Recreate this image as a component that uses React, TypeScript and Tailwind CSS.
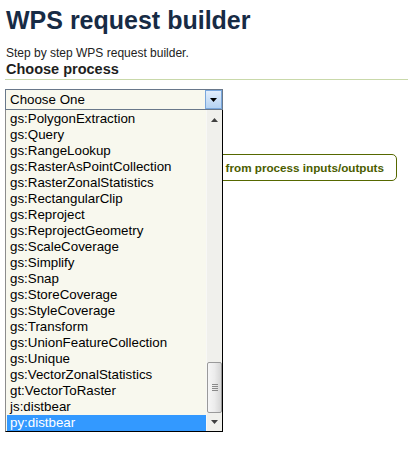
import React from "react";

const items = [
  "gs:PolygonExtraction",
  "gs:Query",
  "gs:RangeLookup",
  "gs:RasterAsPointCollection",
  "gs:RasterZonalStatistics",
  "gs:RectangularClip",
  "gs:Reproject",
  "gs:ReprojectGeometry",
  "gs:ScaleCoverage",
  "gs:Simplify",
  "gs:Snap",
  "gs:StoreCoverage",
  "gs:StyleCoverage",
  "gs:Transform",
  "gs:UnionFeatureCollection",
  "gs:Unique",
  "gs:VectorZonalStatistics",
  "gt:VectorToRaster",
  "js:distbear",
  "py:distbear",
];

export default function App() {
  return (
    <div className="relative w-[408px] h-[456px] bg-white overflow-hidden font-['Liberation_Sans',Arial,sans-serif]">
      <div className="pl-[6px] pt-[5px]">
        <h1 className="text-[25px] font-bold leading-[30px] text-[#172b45]">WPS request builder</h1>
        <p className="mt-[11px] text-[12px] leading-[14px] text-[#222]">Step by step WPS request builder.</p>
        <h2 className="mt-[1px] text-[14.5px] font-bold leading-[16px] text-[#1e1e1e]">Choose process</h2>
      </div>
      <div className="ml-[5px] mt-[2px] h-px bg-[#c9d9aa]" />

      <div className="relative ml-[5px] mt-[9px] w-[218px] z-10">
        <div className="relative h-[21px] border border-[#69788a] bg-[#f8f8ee] pl-[4px] text-[13.33px] leading-[19px] text-black">
          Choose One
          <div className="absolute right-0 top-0 w-[17px] h-[19px] border border-[#7aa7dc] bg-gradient-to-b from-[#e3eefb] to-[#b5d3f3] flex items-center justify-center">
            <svg width="7" height="4" viewBox="0 0 7 4">
              <path d="M0 0H7L3.5 4Z" fill="#000" />
            </svg>
          </div>
        </div>

        <div className="absolute left-0 top-[21px] w-[218px] h-[322px] border-l border-l-[#8c8c8c] border-r border-r-black border-b border-b-black bg-[#f8f8ee] pt-px pl-px flex">
          <div className="flex-1 flex flex-col">
            {items.map((it, i) => {
              const sel = i === items.length - 1;
              return (
                <div
                  key={it}
                  className={
                    "h-[16px] pl-[3px] text-[13.33px] leading-[16px] whitespace-nowrap " +
                    (sel ? "bg-[#3399ff] text-white" : "text-black")
                  }
                >
                  {it}
                </div>
              );
            })}
          </div>
          <div className="relative w-[16px] -mt-px bg-[#f0f0ec] border-l border-l-[#f8f8f6]">
            <div className="absolute left-0 top-[4px] w-full h-[12px] flex items-center justify-center">
              <svg width="7" height="4" viewBox="0 0 7 4">
                <path d="M0 4H7L3.5 0Z" fill="#404040" />
              </svg>
            </div>
            <div className="absolute left-0 top-[252px] w-[15px] h-[51px] rounded-[2px] border border-[#9a9a9a] bg-gradient-to-r from-[#f6f6f6] via-[#ececec] to-[#d6d6d6] flex flex-col items-center justify-center gap-[1px]">
              <div className="w-[6px] h-px bg-[#8a8a8a]" />
              <div className="w-[6px] h-px bg-[#8a8a8a]" />
              <div className="w-[6px] h-px bg-[#8a8a8a]" />
              <div className="w-[6px] h-px bg-[#8a8a8a]" />
            </div>
            <div className="absolute left-0 bottom-[3px] w-full h-[12px] flex items-center justify-center">
              <svg width="7" height="4" viewBox="0 0 7 4">
                <path d="M0 0H7L3.5 4Z" fill="#404040" />
              </svg>
            </div>
          </div>
        </div>
      </div>

      <div className="ml-[135px] mt-[44px] flex w-[262px] h-[27px] items-center justify-end rounded-[5px] border border-[#566800] bg-white pr-[12px] text-[11.7px] font-bold leading-[25px] text-[#4b5d00] whitespace-nowrap">
        from process inputs/outputs
      </div>
    </div>
  );
}
